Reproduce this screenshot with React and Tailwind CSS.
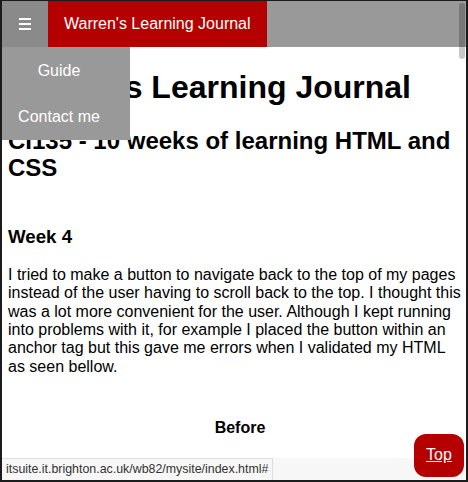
import React from "react";

const App = () => {
  return (
    <div className="w-[468px] h-[482px] bg-[#1b1b1b] pt-[1px] pl-[2px] pr-[2px] pb-[2px] font-['Liberation_Sans',Arial,sans-serif]">
      <div className="relative h-full overflow-hidden bg-white text-black leading-[1.15]">
        {/* top nav */}
        <nav className="flex h-[46px] bg-[#999999] text-white">
          <button
            type="button"
            aria-label="Menu"
            className="flex w-[46px] flex-col items-center justify-center gap-[3.5px] bg-[#8a8a8a]"
          >
            <span className="h-[1.5px] w-[12px] bg-white" />
            <span className="h-[1.5px] w-[12px] bg-white" />
            <span className="h-[1.5px] w-[12px] bg-white" />
          </button>
          <a href="#" className="flex items-center bg-[#b50000] px-4 text-[16px]">
            Warren's Learning Journal
          </a>
        </nav>

        {/* open dropdown */}
        <div className="absolute left-0 top-[46px] z-10 w-[128px] bg-[#999999] text-[16px] text-white">
          <a href="#" className="flex h-[46.5px] items-center justify-center pl-4 pr-[30px] pt-[1px]">Guide</a>
          <a href="#" className="flex h-[46.5px] items-center justify-center pl-4 pr-[30px] pt-[1px]">Contact me</a>
        </div>

        <main className="pl-[6px]">
          <h1 className="mt-[21.5px] text-[32px] font-bold">Warren's Learning Journal</h1>
          <h2 className="mt-[21.5px] text-[24px] font-bold">CI135 - 10 weeks of learning HTML and CSS</h2>
          <h3 className="mt-[43.8px] text-[18.72px] font-bold">Week 4</h3>
          <p className="mt-[18.5px] text-[16px]">
            I tried to make a button to navigate back to the top of my pages instead of the user having to scroll
            back to the top. I thought this was a lot more convenient for the user. Although I kept running into
            problems with it, for example I placed the button within an anchor tag but this gave me errors when I
            validated my HTML as seen bellow.
          </p>
          <p className="mt-[42.5px] pl-[12px] pr-[6px] text-center text-[16px] font-bold">Before</p>
        </main>

        {/* status strip */}
        <div className="absolute bottom-0 left-0 right-0 h-[22px] bg-[#f7f7f7]" />
        <div className="absolute bottom-0 left-0 flex h-[22px] w-[271px] items-center border-r border-t border-[#dddddd] bg-[#f7f7f7] pl-[4px] text-[12.4px] text-[#333333]">
          itsuite.it.brighton.ac.uk/wb82/mysite/index.html#
        </div>

        {/* back to top */}
        <a
          href="#"
          className="absolute bottom-[3px] right-[2px] z-20 flex h-[43px] w-[50px] items-center justify-center rounded-[12px] bg-[#b50000] text-[16px] text-white underline"
        >
          Top
        </a>

        {/* overlay scrollbar */}
        <div className="absolute right-[1px] top-[2px] h-[56px] w-[6px] rounded-full bg-black/[0.22]" />
      </div>
    </div>
  );
};

export default App;
